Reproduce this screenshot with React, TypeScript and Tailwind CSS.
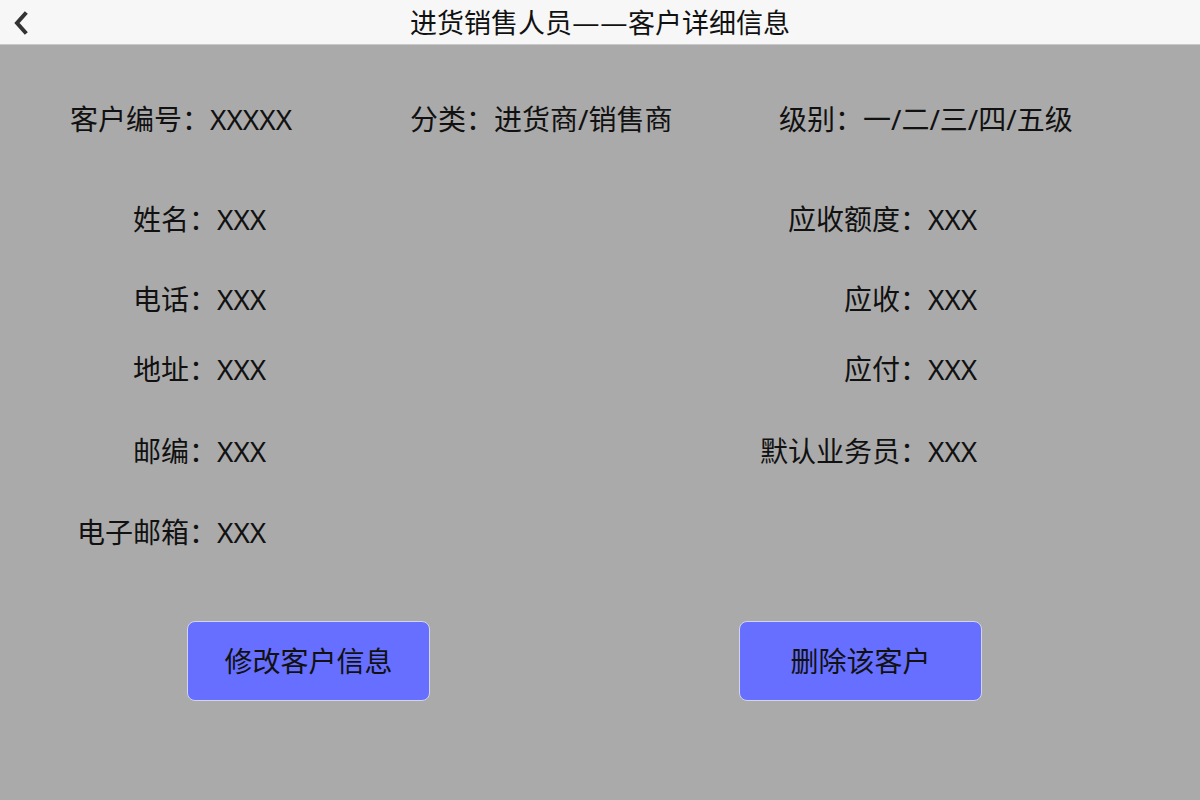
const rows = [
  { l: "姓名：", lv: "XXX", r: "应收额度：", rv: "XXX", mt: "mt-[60px]" },
  { l: "电话：", lv: "XXX", r: "应收：", rv: "XXX", mt: "mt-[40px]" },
  { l: "地址：", lv: "XXX", r: "应付：", rv: "XXX", mt: "mt-[30px]" },
  { l: "邮编：", lv: "XXX", r: "默认业务员：", rv: "XXX", mt: "mt-[42px]" },
  { l: "电子邮箱：", lv: "XXX", r: "", rv: "", mt: "mt-[41px]" },
];

const App = () => {
  return (
    <div className="w-[1200px] h-[800px] bg-[#aaaaaa] text-[#111] font-['Noto_Sans','Noto_Sans_CJK_SC',sans-serif] overflow-hidden">
      {/* header */}
      <div className="h-[45px] bg-[#f7f7f7] border-b border-[#c9c9c9] flex items-center relative">
        <button className="absolute left-[8px] top-[10px] w-[24px] h-[26px] flex items-center justify-center">
          <svg width="16" height="24" viewBox="0 0 16 24">
            <polyline points="13,3 5,12 13,21" fill="none" stroke="#333" strokeWidth="4" strokeLinecap="square" />
          </svg>
        </button>
        <div className="w-full text-center text-[27px] leading-[44px] font-['Noto_Sans_CJK_SC',sans-serif]">
          进货销售人员
          <span className="inline-block w-[28px] text-center scale-x-[1.15]">—</span>
          <span className="inline-block w-[28px] text-center scale-x-[1.15]">—</span>
          客户详细信息
        </div>
      </div>

      {/* top row */}
      <div className="mt-[54px] h-[40px] flex items-center pl-[70px] text-[28px] leading-[40px]">
        <div className="w-[340px]">客户编号：XXXXX</div>
        <div className="w-[369px]">分类：进货商/销售商</div>
        <div>级别：一/二/三/四/五级</div>
      </div>

      {/* detail rows */}
      {rows.map((row, i) => (
        <div key={i} className={`${row.mt} h-[40px] grid grid-cols-[217px_511px_200px_1fr] text-[28px] leading-[40px]`}>
          <div className="text-right whitespace-nowrap">{row.l}</div>
          <div>{row.lv}</div>
          <div className="text-right whitespace-nowrap">{row.r}</div>
          <div>{row.rv}</div>
        </div>
      ))}

      {/* buttons */}
      <div className="mt-[69px] flex">
        <button className="ml-[187px] w-[243px] h-[80px] rounded-[8px] bg-[#666fff] border border-[#d4d4e8] text-[28px] text-[#111]">
          修改客户信息
        </button>
        <button className="ml-[309px] w-[243px] h-[80px] rounded-[8px] bg-[#666fff] border border-[#d4d4e8] text-[28px] text-[#111]">
          删除该客户
        </button>
      </div>
    </div>
  );
};

export default App;
